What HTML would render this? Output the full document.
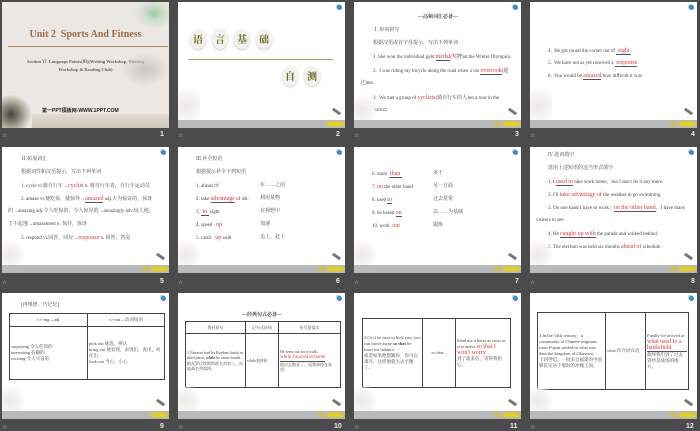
<!DOCTYPE html>
<html><head><meta charset="utf-8"><style>
*{margin:0;padding:0;box-sizing:border-box}
body{width:700px;height:431px;background:#4b4b4b;position:relative;overflow:hidden;font-family:"Liberation Serif","Noto Serif CJK SC",serif;color:#333}
.s{position:absolute;width:167px;height:126px;background:#fff;overflow:hidden}
.bar{position:absolute;left:0;top:118px;width:100%;height:8px;background:#b9b9b9}
.y1{position:absolute;top:120px;right:2px;width:16px;height:4px;background:#e8d400}
.y2{position:absolute;top:120px;right:21px;width:6px;height:4px;background:#d8c040}
.ic{position:absolute;top:3px;right:3px;width:5px;height:5px;border-radius:50%;background:#3a8cc0;box-shadow:-1px -1px 0 #9cd}
.pen{position:absolute;right:4px;top:108px;width:9px;height:3px;background:#777;transform:rotate(35deg)}
.fl{position:absolute;left:0;top:92px;width:22px;height:26px;background:radial-gradient(circle at 40% 60%,#ece9e4 0,#f6f5f3 50%,rgba(255,255,255,0) 75%)}
.t{position:absolute;font-size:5px;line-height:6px;white-space:nowrap;color:#444}
.r{color:#e33;font-size:6px}
.l{position:absolute;font-size:6px;color:#ccc;font-family:"Liberation Sans",sans-serif}
.n{position:absolute;font-size:7px;color:#eee;font-weight:bold;font-family:"Liberation Sans",sans-serif}
.u{display:inline-block;border-bottom:0.5px solid #555}
table{position:absolute;border-collapse:collapse;font-size:4.5px;line-height:6px;color:#444}
td{border:0.8px solid #444;vertical-align:middle;padding:1px}
.c{position:absolute;width:16px;height:20px;border-radius:50%;background:#f2f2f0;box-shadow:0 1px 2px #ccc;font-size:10px;line-height:20px;text-align:center;font-weight:bold;color:#6b6b20;font-family:'Noto Serif CJK SC',serif}
</style></head><body>

<div class="s" style="left:2px;top:2px;background:#ebe7e3">
<div style="position:absolute;left:130px;top:0;width:37px;height:28px;background:radial-gradient(ellipse at 60% 40%,#9c9 0,#cdc 30%,transparent 65%)"></div>
<div class="t" style="left:0;width:167px;text-align:center;top:27px;font-size:10px;line-height:12px;font-weight:bold;color:#a06a3e">Unit 2&nbsp; Sports And Fitness</div>
<div style="position:absolute;left:6px;top:44px;width:160px;height:1px;background:#b88a60"></div>
<div class="t" style="left:0;width:167px;text-align:center;top:57px;font-size:4.5px;color:#665;font-weight:bold">Section Ⅵ&nbsp; Language Points(Ⅲ)(Writing Workshop, Viewing</div>
<div class="t" style="left:0;width:167px;text-align:center;top:65px;font-size:4.5px;color:#665;font-weight:bold">Workshop &amp; Reading Club)</div>
<div style="position:absolute;left:120px;top:50px;width:47px;height:35px;background:radial-gradient(ellipse,#c8c6c2 0,transparent 70%)"></div>
<div style="position:absolute;left:0;top:92px;width:30px;height:34px;background:radial-gradient(ellipse at 30% 60%,#444 0,#887 30%,transparent 70%)"></div>
<div style="position:absolute;left:30px;top:112px;width:137px;height:14px;background:linear-gradient(#e0dad2,#d2c8bc)"></div>
<div class="t" style="left:40px;top:106px;font-size:5px;font-weight:bold;color:#222;font-family:'Liberation Sans','Noto Sans CJK SC',sans-serif">第一PPT模板网-WWW.1PPT.COM</div>
</div>
<div class="l" style="left:2px;top:132px">☆</div><div class="n" style="left:160px;top:131px">1</div>

<div class="s" style="left:178px;top:2px">
<div class="ic"></div>
<div class="c" style="left:12px;top:27px">语</div>
<div class="c" style="left:34px;top:27px">言</div>
<div class="c" style="left:56px;top:27px">基</div>
<div class="c" style="left:78px;top:27px">础</div>
<div style="position:absolute;left:10px;top:57px;width:145px;height:1px;background:#c09a70"></div>
<div class="c" style="left:104px;top:64px">自</div>
<div class="c" style="left:126px;top:64px">测</div>
<div class="fl" style="top:82px;height:36px"></div><div class="pen"></div>
<div class="bar"></div><div class="y1"></div>
</div>
<div class="l" style="left:178px;top:132px">☆</div><div class="n" style="left:336px;top:131px">2</div>

<div class="s" style="left:354px;top:2px">
<div class="ic"></div>
<div class="t" style="left:64px;top:13px;font-weight:bold">—高频词汇必备—</div>
<div class="t" style="left:19px;top:26px">Ⅰ.单词拼写</div>
<div class="t" style="left:19px;top:39px">根据汉语或首字母提示，写出下列单词</div>
<div class="t" style="left:19px;top:52px">1. She won the individual gold <span class="u r">medal</span>(奖牌)at the Winter Olympics.</div>
<div class="t" style="left:19px;top:66px">2.&nbsp; I was riding my bicycle along the road when a car <span class="u r">overtook</span>(超</div>
<div class="t" style="left:6px;top:79px">过)me.</div>
<div class="t" style="left:19px;top:93px">3.&nbsp; We met a group of <span class="r">cyclists</span>(骑自行车的人)on a tour in the</div>
<div class="t" style="left:6px;top:106px">Lake District.</div>
<div class="fl"></div><div class="pen"></div>
<div class="bar"></div><div class="y1"></div><div class="y2"></div>
</div>
<div class="l" style="left:354px;top:132px">☆</div><div class="n" style="left:515px;top:131px">3</div>

<div class="s" style="left:530px;top:2px">
<div class="ic"></div>
<div class="t" style="left:18px;top:46px">4.&nbsp; He got round the corner out of <span class="u r">&nbsp;sight&nbsp;</span>.</div>
<div class="t" style="left:18px;top:58px">5.&nbsp; We have not as yet received a <span class="u r">&nbsp;response</span>.</div>
<div class="t" style="left:18px;top:71px">6.&nbsp; You would be <span class="u r">amazed</span> how difficult it was.</div>
<div class="fl" style="top:82px;height:36px"></div><div class="pen"></div>
<div class="bar"></div><div class="y1"></div><div class="y2"></div>
</div>
<div class="l" style="left:530px;top:132px">☆</div><div class="n" style="left:691px;top:131px">4</div>

<div class="s" style="left:2px;top:147px">
<div class="ic"></div>
<div class="t" style="left:19px;top:10px">Ⅱ.拓展词汇</div>
<div class="t" style="left:19px;top:23px">根据词性和汉语提示，写出下列单词</div>
<div class="t" style="left:19px;top:36px">1. cycle vi.骑自行车→<span class="r">cyclist</span> n. 骑自行车者，自行车运动员</div>
<div class="t" style="left:19px;top:49px">2. amaze vt.使吃惊，使惊异→<span class="u r">amazed</span> adj.大为惊奇的，惊讶</div>
<div class="t" style="left:6px;top:62px">的→amazing adj.令人吃惊的，令人惊异的→amazingly adv.惊人地，</div>
<div class="t" style="left:6px;top:75px">了不起地→amazement n. 惊异，惊讶</div>
<div class="t" style="left:19px;top:88px">3. respond vi.回答，回应→<span class="r">response</span> n. 回答，答复</div>
<div class="fl"></div><div class="pen"></div>
<div class="bar"></div><div class="y1"></div><div class="y2"></div>
</div>
<div class="l" style="left:2px;top:279px">☆</div><div class="n" style="left:160px;top:278px">5</div>

<div class="s" style="left:178px;top:147px">
<div class="ic"></div>
<div class="t" style="left:18px;top:10px">Ⅲ.补全短语</div>
<div class="t" style="left:18px;top:23px">根据提示补全下列短语</div>
<div class="t" style="left:18px;top:36px">1. ahead <span class="r">of</span></div><div class="t" style="left:82px;top:36px">在……之前</div>
<div class="t" style="left:18px;top:49px">2. take <span class="u r">advantage</span> of sth.</div><div class="t" style="left:82px;top:49px">利用某物</div>
<div class="t" style="left:18px;top:62px">3. <span class="u r">&nbsp;in&nbsp;</span> sight</div><div class="t" style="left:82px;top:62px">在视野中</div>
<div class="t" style="left:18px;top:75px">4. speed&nbsp;&nbsp; <span class="r">up</span></div><div class="t" style="left:82px;top:75px">加速</div>
<div class="t" style="left:18px;top:88px">5. catch&nbsp;&nbsp; <span class="r">up</span> with</div><div class="t" style="left:82px;top:88px">追上，赶上</div>
<div class="fl"></div><div class="pen"></div>
<div class="bar"></div><div class="y1"></div><div class="y2"></div>
</div>
<div class="l" style="left:178px;top:279px">☆</div><div class="n" style="left:336px;top:278px">6</div>

<div class="s" style="left:354px;top:147px">
<div class="ic"></div>
<div class="t" style="left:18px;top:24px">6. more <span class="u r">&nbsp;than&nbsp;</span></div><div class="t" style="left:79px;top:24px">多于</div>
<div class="t" style="left:18px;top:37px">7. <span class="r">on</span> the other hand</div><div class="t" style="left:79px;top:37px">另一方面</div>
<div class="t" style="left:18px;top:50px">8. used <span class="u r">to</span></div><div class="t" style="left:79px;top:50px">过去常常</div>
<div class="t" style="left:18px;top:63px">9. be based <span class="u r">on</span></div><div class="t" style="left:79px;top:63px">以……为基础</div>
<div class="t" style="left:18px;top:76px">10. work&nbsp; <span class="r">out</span></div><div class="t" style="left:79px;top:76px">锻炼</div>
<div class="fl"></div><div class="pen"></div>
<div class="bar"></div><div class="y1"></div><div class="y2"></div>
</div>
<div class="l" style="left:354px;top:279px">☆</div><div class="n" style="left:515px;top:278px">7</div>

<div class="s" style="left:530px;top:147px">
<div class="ic"></div>
<div class="t" style="left:18px;top:6px">Ⅳ.选词填空</div>
<div class="t" style="left:18px;top:19px">选用上述短语的适当形式填空</div>
<div class="t" style="left:18px;top:32px">1. I <span class="u r">used to</span> take work home，but I don't do it any more.</div>
<div class="t" style="left:18px;top:45px">2. I'll <span class="r">take advantage of</span> the weather to go swimming.</div>
<div class="t" style="left:18px;top:58px">3. On one hand I have to work；<span class="u r">on the other hand</span>，I have many</div>
<div class="t" style="left:6px;top:71px">visitors to see.</div>
<div class="t" style="left:18px;top:84px">4. He <span class="u r">caught up with</span> the parade and walked behind.</div>
<div class="t" style="left:18px;top:97px">5. The election was held six months <span class="r">ahead of</span> schedule.</div>
<div class="fl"></div><div class="pen"></div>
<div class="bar"></div><div class="y1"></div><div class="y2"></div>
</div>
<div class="l" style="left:530px;top:279px">☆</div><div class="n" style="left:691px;top:278px">8</div>

<div class="s" style="left:2px;top:293px">
<div class="ic"></div>
<div class="t" style="left:19px;top:10px">[再规律，巧记忆]</div>
<table style="left:7px;top:20px;width:156px;height:67px">
<tr style="height:13px"><td style="width:78px;text-align:center">v.+-ing→adj.</td><td style="text-align:center">v.+out→动词短语</td></tr>
<tr><td>surprising 令人吃惊的<br>interesting 有趣的<br>exciting 令人兴奋的</td><td>pick out 挑选，辨认<br>bring out 使显现，表现出，查出，衬托出<br>look out 当心，小心</td></tr>
</table>
<div class="fl"></div><div class="pen"></div>
<div class="bar"></div><div class="y1"></div>
</div>
<div class="l" style="left:2px;top:424px">☆</div><div class="n" style="left:160px;top:423px">9</div>

<div class="s" style="left:178px;top:293px">
<div class="ic"></div>
<div class="t" style="left:64px;top:20px;font-weight:bold">—经典句式必备—</div>
<table style="left:7px;top:28px;width:156px;height:67px;font-size:4px;line-height:5.5px">
<tr style="height:12px"><td style="width:60px;text-align:center">教材原句</td><td style="width:33px;text-align:center">记句式结构</td><td style="text-align:center">仿写促落实</td></tr>
<tr><td>1.Navarro had let Esteban finish in third place, <b>while</b> he came fourth.<br>纳瓦罗让埃斯特班名列第三，而他却名列第四。</td><td>while表转折</td><td>He went out for a walk, <span class="r u" style="font-size:5px">while I stayed at home</span><br>他出去散步了，而我却待在家里。</td></tr>
</table>
<div class="fl"></div><div class="pen"></div>
<div class="bar"></div><div class="y1"></div><div class="y2"></div>
</div>
<div class="l" style="left:178px;top:424px">☆</div><div class="n" style="left:334px;top:423px">10</div>

<div class="s" style="left:354px;top:293px">
<div class="ic"></div>
<table style="left:8px;top:25px;width:149px;height:70px">
<tr><td style="width:60px">2.Or if he tries to kick you, you can move away <b>so that</b> he loses his balance.<br>或者如果他想踢你，你可以离开，这样他就失去平衡了。</td><td style="width:33px;text-align:center">so that...</td><td>Send me a letter as soon as you arrive <span class="r">so that I won't worry</span><br>到了就来信，省得我担心。</td></tr>
</table>
<div class="fl"></div><div class="pen"></div>
<div class="bar"></div><div class="y1"></div><div class="y2"></div>
</div>
<div class="l" style="left:354px;top:424px">☆</div><div class="n" style="left:510px;top:423px">11</div>

<div class="s" style="left:530px;top:293px">
<div class="ic"></div>
<table style="left:7px;top:19px;width:152px;height:78px">
<tr><td style="width:68px">3.In the 14th century，a community of Chinese migrants from Fujian settled in what was then the kingdom of Okinawa.<br>十四世纪，一批来自福建的中国移民定居于那时的冲绳王国。</td><td style="width:40px">what 作介词宾语</td><td>Finally we arrived at <span class="r u">what used to a battlefield</span><br>最终我们到了过去曾经是战场的地方。</td></tr>
</table>
<div class="fl"></div><div class="pen"></div>
<div class="bar"></div><div class="y1"></div><div class="y2"></div>
</div>
<div class="l" style="left:530px;top:424px">☆</div><div class="n" style="left:686px;top:423px">12</div>

</body></html>
